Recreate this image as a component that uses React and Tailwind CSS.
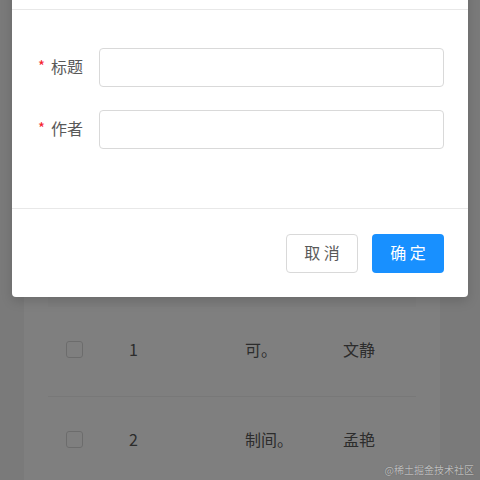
import React from "react";

const rows = [
  { id: 1, title: "可。", author: "文静" },
  { id: 2, title: "制间。", author: "孟艳" },
];

const FormItem = ({ label }) => (
  <div className="flex items-center">
    <label className="w-[87px] flex items-center justify-end pr-[16px] pb-[4px] text-[16px] leading-none text-[#595959]">
      <span className="text-[#f5222d] mr-[6px] text-[15px] leading-none">*</span>
      {label}
    </label>
    <input
      type="text"
      className="w-[345px] h-[39px] border border-[#d9d9d9] rounded-[4px] bg-white outline-none px-3"
    />
  </div>
);

const App = () => {
  return (
    <div
      className="relative w-[480px] h-[480px] overflow-hidden bg-[#f4f4f4]"
      style={{ fontFamily: '"Noto Sans CJK SC", "Noto Sans", sans-serif' }}
    >
      {/* page behind the dialog */}
      <div className="ml-6 w-[416px] h-full bg-white pt-[250px] px-6">
        <div className="h-[57px] bg-[#fafafa]" />
        {rows.map((row) => (
          <div
            key={row.id}
            className="grid grid-cols-[81px_116px_98px_1fr] items-center h-[90px] pb-[5px] border-b border-[#f0f0f0] text-[16px] text-[#595959]"
          >
            <div className="pl-[18px]">
              <div className="w-[17px] h-[17px] border border-[#d9d9d9] rounded-[3px] bg-white" />
            </div>
            <div>{row.id}</div>
            <div>{row.title}</div>
            <div>{row.author}</div>
          </div>
        ))}
      </div>

      {/* mask */}
      <div className="absolute inset-0 bg-black/50" />

      {/* dialog */}
      <div className="absolute left-3 top-[-46px] w-[456px] bg-white rounded-[4px] shadow-[0_4px_12px_rgba(0,0,0,0.15)]">
        <div className="h-[56px] border-b border-[#e8e8e8]" />
        <div className="pt-[38px] pb-[59px] flex flex-col gap-[23px]">
          <FormItem label="标题" />
          <FormItem label="作者" />
        </div>
        <div className="border-t border-[#e8e8e8] pt-[25px] pb-[24px] pr-6 flex justify-end gap-[14px]">
          <button className="w-[72px] h-[39px] pb-[3px] border border-[#d9d9d9] rounded-[4px] bg-white text-[16px] text-[#595959]">
            取 消
          </button>
          <button className="w-[72px] h-[39px] pb-[3px] rounded-[4px] bg-[#1890ff] text-[16px] text-white">
            确 定
          </button>
        </div>
      </div>

      <div className="absolute right-[6px] bottom-[5px] text-[10px] leading-none text-[#bdbdbd] [text-shadow:0_0_1px_#555]">
        @稀土掘金技术社区
      </div>
    </div>
  );
};

export default App;
